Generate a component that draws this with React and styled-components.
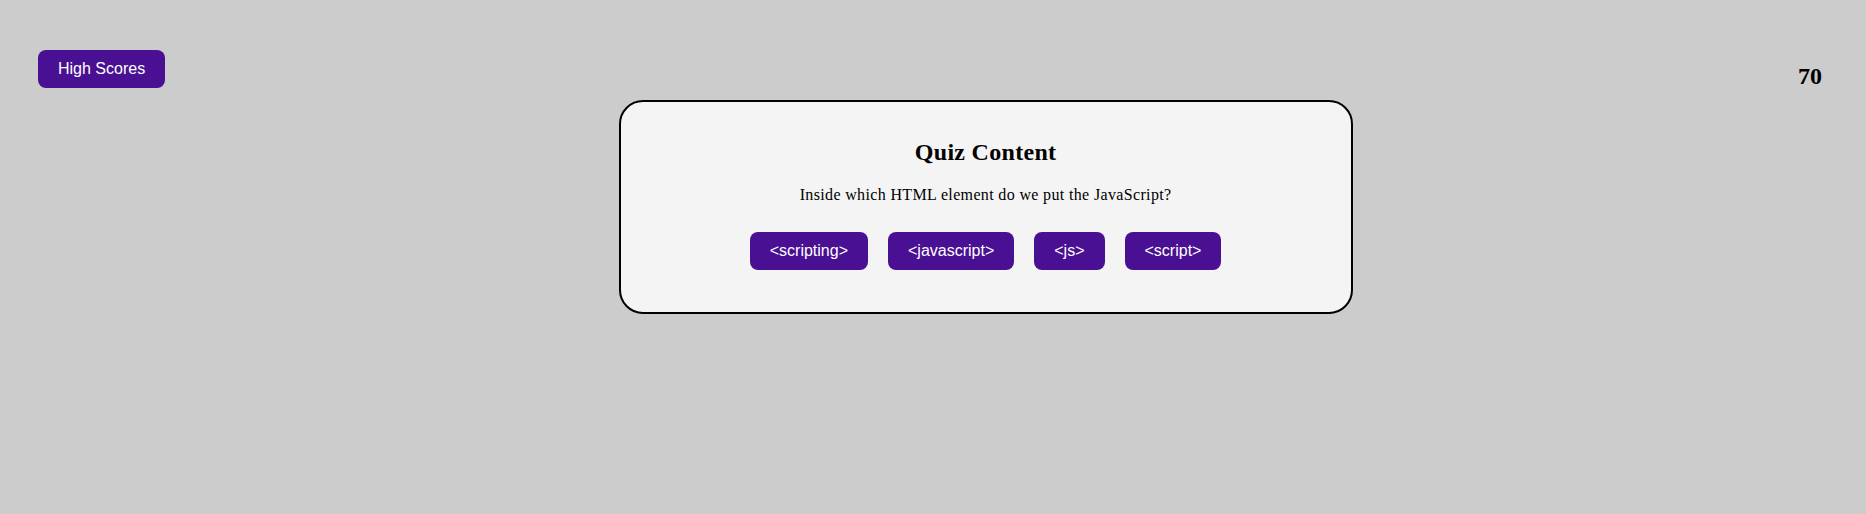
import React from 'react';
import styled, { createGlobalStyle } from 'styled-components';

//------------- Styling -------------//

const GlobalStyle = createGlobalStyle`
  html, body {
    margin: 0;
    padding: 0;
    background: #cccccc;
  }
  body {
    font-family: "Liberation Serif", serif;
    color: #000;
  }
`;

const Page = styled.div`
  display: flex;
  justify-content: space-between;
  align-items: flex-start;
  padding: 50px 44px 0 38px;
  min-height: 464px;
`;

const Button = styled.button`
  background-color: #4a1093;
  color: #fff;
  border: none;
  border-radius: 8px;
  padding: 10px 20px;
  font-family: "Liberation Sans", Arial, sans-serif;
  font-size: 16px;
  line-height: 18px;
  cursor: pointer;
`;

const Score = styled.div`
  margin-top: 12px;
  font-size: 24px;
  font-weight: bold;
  line-height: 28px;
`;

const Card = styled.div`
  margin: 50px 0 0 8px;
  width: 734px;
  box-sizing: border-box;
  background: #f4f4f4;
  border: 2px solid #000;
  border-radius: 24px;
  padding: 36px 20px 42px;
  display: flex;
  flex-direction: column;
  align-items: center;
`;

const Title = styled.h2`
  margin: 0;
  font-size: 24px;
  line-height: 28px;
  font-weight: bold;
  letter-spacing: 0.3px;
`;

const Question = styled.p`
  margin: 19px 0 0;
  font-size: 16px;
  line-height: 20px;
  letter-spacing: 0.35px;
`;

const Choices = styled.div`
  display: flex;
  gap: 20px;
  margin-top: 27px;
`;

//------------- Component -------------//

const choices = ['<scripting>', '<javascript>', '<js>', '<script>'];

export default function App() {
  return (
    <>
      <GlobalStyle />
      <Page>
        <Button>High Scores</Button>
        <Card>
          <Title>Quiz Content</Title>
          <Question>Inside which HTML element do we put the JavaScript?</Question>
          <Choices>
            {choices.map((c) => (
              <Button key={c}>{c}</Button>
            ))}
          </Choices>
        </Card>
        <Score>70</Score>
      </Page>
    </>
  );
}
